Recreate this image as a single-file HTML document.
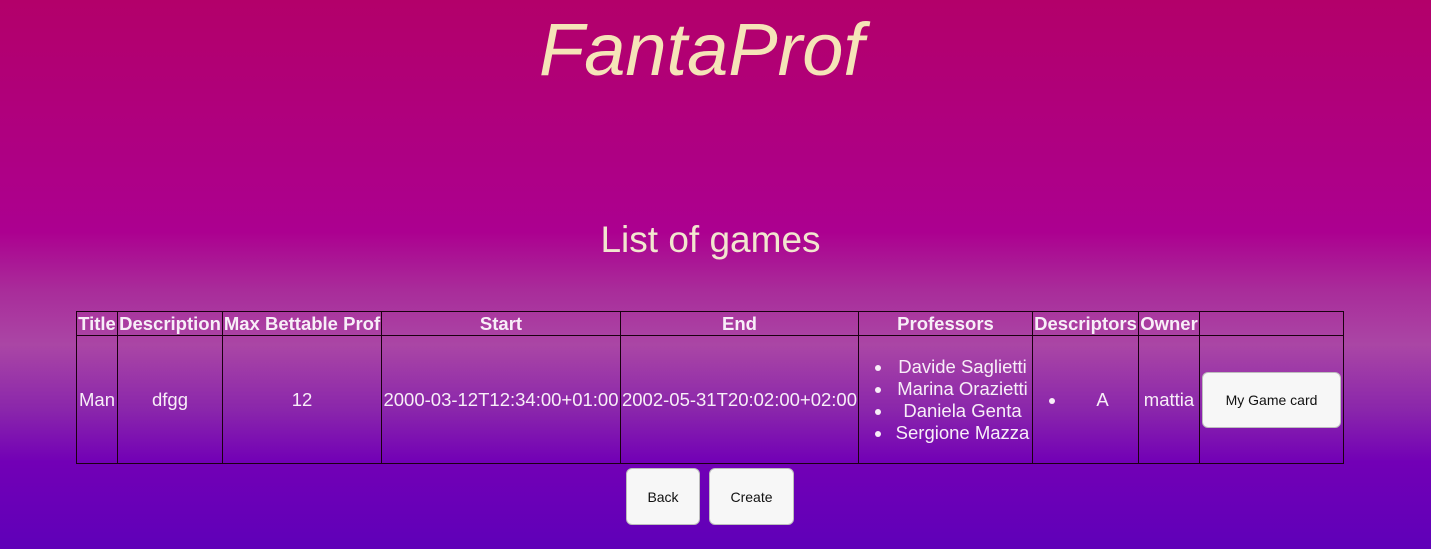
<!DOCTYPE html>
<html><head><meta charset="utf-8"><style>
html,body{margin:0;padding:0;width:1431px;height:549px;overflow:hidden}
body{position:relative;font-family:"Liberation Sans",Arial,sans-serif;
background:linear-gradient(to bottom,#b3006a 0px,#ac0090 232px,#a92c9a 290px,#aa46a5 345px,#8a26ab 410px,#7200b6 462px,#5f00b8 549px);}
.t{position:absolute;width:1431px;text-align:center;color:#f5e4b8;margin:0}
h1.t{left:-14px;top:8px;font-size:74px;font-weight:normal;font-style:italic;line-height:84px}
h2.t{left:-5px;top:218px;font-size:37px;font-weight:normal;line-height:44px;color:#f2e6cf}
table{position:absolute;left:76px;top:311px;border-collapse:collapse;color:#f8eef8;font-size:18.5px}
td,th{border:1px solid #1a0010;padding:0;text-align:center;white-space:nowrap}
th{height:23px;font-weight:bold}
td{height:127px}
ul{margin:0;padding:0 0 0 34px;text-align:center;list-style:disc}
li{line-height:22px}
.btn{position:absolute;background:#f7f7f7;border:1px solid #bdbdbd;border-radius:6px;color:#111;font-size:14px;display:flex;align-items:center;justify-content:center;box-sizing:border-box}
</style></head><body>
<h1 class="t">FantaProf</h1>
<h2 class="t">List of games</h2>
<table>
<tr><th style="width:40px">Title</th><th style="width:104px">Description</th><th style="width:158px">Max Bettable Prof</th><th style="width:238px">Start</th><th style="width:237px">End</th><th style="width:173px">Professors</th><th style="width:105px">Descriptors</th><th style="width:60px">Owner</th><th style="width:143px"></th></tr>
<tr><td>Man</td><td>dfgg</td><td>12</td><td>2000-03-12T12:34:00+01:00</td><td>2002-05-31T20:02:00+02:00</td>
<td><ul><li>Davide Saglietti</li><li>Marina Orazietti</li><li>Daniela Genta</li><li>Sergione Mazza</li></ul></td>
<td><ul><li>A</li></ul></td><td>mattia</td><td></td></tr>
</table>
<div class="btn" style="left:1202px;top:372px;width:139px;height:56px">My Game card</div>
<div class="btn" style="left:626px;top:468px;width:74px;height:57px">Back</div>
<div class="btn" style="left:709px;top:468px;width:85px;height:57px">Create</div>
</body></html>
